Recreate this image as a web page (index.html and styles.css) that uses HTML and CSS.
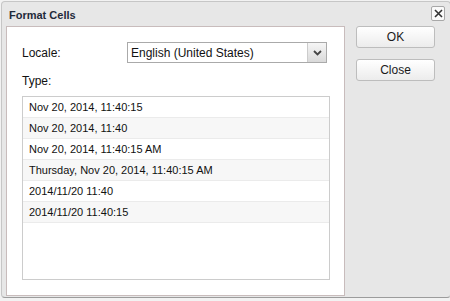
FILE: index.html
```html
<!DOCTYPE html>
<html lang="en">
<head>
  <meta charset="UTF-8">
  <title>Format Cells</title>
  <link rel="stylesheet" href="styles.css">
</head>
<body>
  <div class="dialog">
    <div class="dialog-header">
      <span class="dialog-title">Format Cells</span>
      <button class="close-x" title="Close">
        <svg width="9" height="9" viewBox="0 0 9 9"><path d="M1 1L8 8M8 1L1 8" stroke="#333" stroke-width="1.6"/></svg>
      </button>
    </div>
    <div class="dialog-body">
      <div class="panel">
        <div class="locale-row">
          <label class="field-label">Locale:</label>
          <div class="select">
            <span class="select-value">English (United States)</span>
            <span class="select-arrow">
              <svg width="9" height="6" viewBox="0 0 9 6"><path d="M1 1L4.5 4.5L8 1" fill="none" stroke="#444" stroke-width="1.8"/></svg>
            </span>
          </div>
        </div>
        <div class="type-label">Type:</div>
        <ul class="type-list">
          <li>Nov 20, 2014, 11:40:15</li>
          <li>Nov 20, 2014, 11:40</li>
          <li>Nov 20, 2014, 11:40:15 AM</li>
          <li>Thursday, Nov 20, 2014, 11:40:15 AM</li>
          <li>2014/11/20 11:40</li>
          <li>2014/11/20 11:40:15</li>
        </ul>
      </div>
      <div class="actions">
        <button class="btn">OK</button>
        <button class="btn">Close</button>
      </div>
    </div>
  </div>
</body>
</html>
```

FILE: styles.css
```css
body {
  margin: 0;
  background: #f2f2f2;
  font-family: "Liberation Sans", Arial, sans-serif;
  color: #111;
}

.dialog {
  margin: 1px 0 0 1px;
  width: 450px;
  height: 297px;
  box-sizing: border-box;
  background: #e7e7e7;
  border: 1px solid #c6c6c6;
  border-bottom-color: #9c9c9c;
  border-radius: 4px;
}

.dialog-header {
  height: 24px;
  display: flex;
  align-items: center;
  justify-content: space-between;
  padding: 0 5px 0 7px;
}

.dialog-title {
  font-size: 11px;
  font-weight: bold;
  color: #1f2a3a;
  padding-top: 2px;
}

.close-x {
  width: 14px;
  height: 15px;
  padding: 0;
  margin-top: -1px;
  display: flex;
  align-items: center;
  justify-content: center;
  background: #fafafa;
  border: 1px solid #a8a8a8;
  border-radius: 2px;
}

.dialog-body {
  display: flex;
  padding-left: 4px;
}

.panel {
  width: 339px;
  height: 270px;
  box-sizing: border-box;
  background: #fff;
  border: 1px solid #c8bcbc;
  padding: 15px 0 0 15px;
}

.locale-row {
  display: flex;
  align-items: center;
  height: 21px;
}

.field-label {
  font-size: 12px;
  width: 105px;
}

.select {
  width: 200px;
  height: 21px;
  box-sizing: border-box;
  border: 1px solid #aaa;
  display: flex;
  align-items: center;
  justify-content: space-between;
}

.select-value {
  font-size: 12px;
  padding-left: 3px;
}

.select-arrow {
  width: 18px;
  height: 19px;
  display: flex;
  align-items: center;
  justify-content: center;
  border-left: 1px solid #ccc;
  background: linear-gradient(#f6f6f6, #d9d9d9);
}

.type-label {
  font-size: 12px;
  line-height: 14px;
  margin-top: 11px;
}

.type-list {
  list-style: none;
  margin: 8px 0 0 0;
  padding: 0;
  width: 308px;
  height: 184px;
  box-sizing: border-box;
  border: 1px solid #ccc;
}

.type-list li {
  font-size: 11px;
  height: 20px;
  line-height: 20px;
  padding-left: 6px;
  border-bottom: 1px solid #ebebeb;
}

.type-list li:nth-child(even) {
  background: #f7f7f7;
}

.actions {
  display: flex;
  flex-direction: column;
  gap: 11px;
  margin-left: 11px;
}

.btn {
  width: 79px;
  height: 22px;
  font-family: "Liberation Sans", Arial, sans-serif;
  font-size: 12px;
  color: #1a1a1a;
  background: linear-gradient(#ffffff, #ececec);
  border: 1px solid #bdbdbd;
  border-radius: 3px;
  padding: 0;
}
```
